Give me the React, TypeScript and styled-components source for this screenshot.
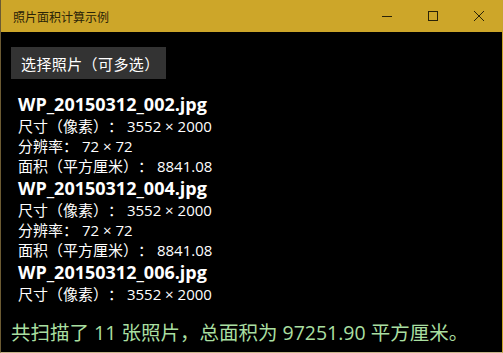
import React from "react";
import styled, { createGlobalStyle } from "styled-components";

const Global = createGlobalStyle`
  html, body { margin: 0; padding: 0; background: #000; }
  body {
    font-family: "Open Sans", "Noto Sans CJK SC", sans-serif;
    text-spacing-trim: space-all;
  }
`;

const Window = styled.div`
  width: 503px;
  height: 353px;
  box-sizing: border-box;
  border: 1px solid #c9a42c;
  border-bottom-color: #c8b48a;
  border-left-color: #6b5a32;
  border-top: none;
  display: flex;
  flex-direction: column;
  background: #000;
  overflow: hidden;
`;

const TitleBar = styled.div`
  height: 32px;
  flex: none;
  background: #cda629;
  display: flex;
  align-items: center;
`;

const Title = styled.div`
  flex: 1;
  padding-left: 12px;
  font-family: "Noto Sans CJK SC", sans-serif;
  font-size: 12px;
  color: #2a2308;
`;

const CtrlButton = styled.div`
  width: 46px;
  height: 31px;
  display: flex;
  align-items: center;
  justify-content: center;
  color: #2a2308;
`;

const Content = styled.div`
  flex: 1;
  display: flex;
  flex-direction: column;
  min-height: 0;
  padding: 15px 0 6px 10px;
`;

const PickButton = styled.div`
  align-self: flex-start;
  flex: none;
  width: 155px;
  height: 32px;
  box-sizing: border-box;
  background: #333333;
  color: #ffffff;
  font-family: "Noto Sans CJK SC", sans-serif;
  font-size: 15px;
  letter-spacing: 0.4px;
  display: flex;
  align-items: center;
  padding-left: 10px;
`;

const List = styled.div`
  flex: 1;
  min-height: 0;
  overflow: hidden;
  margin-top: 13px;
  padding-left: 7px;
  color: #fff;
`;

const FileName = styled.div`
  font-family: "Open Sans", "Noto Sans CJK SC", sans-serif;
  font-weight: 700;
  font-size: 18px;
  line-height: 24px;
`;

const Detail = styled.div`
  font-family: "Open Sans", "Noto Sans CJK SC", sans-serif;
  font-size: 15px;
  line-height: 20px;
`;

const Footer = styled.div`
  flex: none;
  height: 26px;
  margin-top: 16px;
  font-family: "Open Sans", "Noto Sans CJK SC", sans-serif;
  font-size: 19.5px;
  line-height: 26px;
  color: #a9dfa0;
  white-space: nowrap;
`;

const files = ["WP_20150312_002.jpg", "WP_20150312_004.jpg", "WP_20150312_006.jpg", "WP_20150312_008.jpg"];

export default function App() {
  return (
    <>
      <Global />
      <Window>
        <TitleBar>
          <Title>照片面积计算示例</Title>
          <CtrlButton>
            <svg width="10" height="10" viewBox="0 0 10 10"><path d="M0 5.5h10" stroke="currentColor" strokeWidth="1" /></svg>
          </CtrlButton>
          <CtrlButton>
            <svg width="10" height="10" viewBox="0 0 10 10"><rect x="0.5" y="0.5" width="9" height="9" fill="none" stroke="currentColor" strokeWidth="1" /></svg>
          </CtrlButton>
          <CtrlButton>
            <svg width="10" height="10" viewBox="0 0 10 10"><path d="M0 0L10 10M10 0L0 10" stroke="currentColor" strokeWidth="1" /></svg>
          </CtrlButton>
        </TitleBar>
        <Content>
          <PickButton>选择照片（可多选）</PickButton>
          <List>
            {files.map((f) => (
              <div key={f}>
                <FileName>{f}</FileName>
                <Detail>尺寸（像素）： 3552 × 2000</Detail>
                <Detail>分辨率： 72 × 72</Detail>
                <Detail>面积（平方厘米）： 8841.08</Detail>
              </div>
            ))}
          </List>
          <Footer>共扫描了 11 张照片，总面积为 97251.90 平方厘米。</Footer>
        </Content>
      </Window>
    </>
  );
}
